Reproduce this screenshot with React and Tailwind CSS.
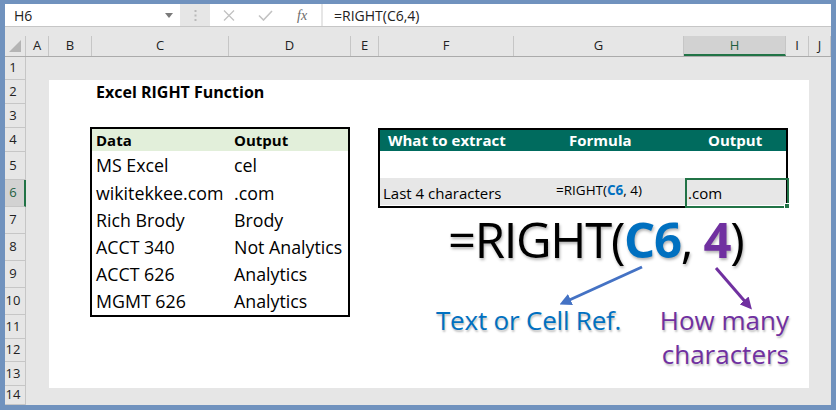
import React from "react";

const colHeaders = [
  { l: "A", w: "w-[23px]" },
  { l: "B", w: "w-[43px]" },
  { l: "C", w: "w-[137px]" },
  { l: "D", w: "w-[122px]" },
  { l: "E", w: "w-[28px]" },
  { l: "F", w: "w-[135px]" },
  { l: "G", w: "w-[170px]" },
  { l: "H", w: "w-[102px]", active: true },
  { l: "I", w: "w-[23px]" },
  { l: "J", w: "w-[22px]" },
];

const rowHeaders = [
  { n: 1, h: "h-[23px]" },
  { n: 2, h: "h-[24px]" },
  { n: 3, h: "h-[24px]" },
  { n: 4, h: "h-[24px]" },
  { n: 5, h: "h-[28px]" },
  { n: 6, h: "h-[27px]", active: true },
  { n: 7, h: "h-[27px]" },
  { n: 8, h: "h-[27px]" },
  { n: 9, h: "h-[27px]" },
  { n: 10, h: "h-[27px]" },
  { n: 11, h: "h-[24px]" },
  { n: 12, h: "h-[23px]" },
  { n: 13, h: "h-[24px]" },
  { n: 14, h: "h-[19px]" },
];

const dataRows = [
  ["MS Excel", "cel", "h-[28px]"],
  ["wikitekkee.com", ".com", "h-[27px]"],
  ["Rich Brody", "Brody", "h-[27px]"],
  ["ACCT 340", "Not Analytics", "h-[27px]"],
  ["ACCT 626", "Analytics", "h-[27px]"],
  ["MGMT 626", "Analytics", "h-[28px]"],
];

function FormulaBar() {
  return (
    <div className="flex h-[23px] border-b border-[#c6c6c6] bg-[#e6e6e6]">
      <div className="flex w-[175px] items-center justify-between bg-white pl-[9px] pr-[7px] text-[14px] text-[#222]">
        <span>H6</span>
        <svg width="8" height="5" viewBox="0 0 8 5">
          <path d="M0 0h8L4 5z" fill="#7a7a7a" />
        </svg>
      </div>
      <div className="flex w-[30px] items-center justify-center">
        <svg width="3" height="11" viewBox="0 0 3 11">
          <rect x="0.5" y="0" width="2" height="2" fill="#b9b9b9" />
          <rect x="0.5" y="4.5" width="2" height="2" fill="#b9b9b9" />
          <rect x="0.5" y="9" width="2" height="2" fill="#b9b9b9" />
        </svg>
      </div>
      <div className="flex w-[111px] items-center bg-white">
        <svg className="ml-[13px]" width="12" height="11" viewBox="0 0 12 11">
          <path d="M1 0.5l10 10M11 0.5l-10 10" stroke="#c2c2c2" strokeWidth="1.3" />
        </svg>
        <svg className="ml-[23px]" width="15" height="11" viewBox="0 0 15 11">
          <path d="M1 5.5l4.5 4.5L14 1" stroke="#c2c2c2" strokeWidth="1.6" fill="none" />
        </svg>
        <span className="ml-[24px] font-['Liberation_Serif',serif] text-[14px] italic text-[#6b6b6b]">
          fx
        </span>
      </div>
      <div className="ml-[2px] flex flex-1 items-center bg-white pl-[11px] text-[14px] text-[#222]">
        =RIGHT(C6,4)
      </div>
    </div>
  );
}

function ColumnHeaders() {
  return (
    <div className="flex h-[21px] border-b border-[#ababab] bg-[#e6e6e6] text-[13px] text-[#222]">
      <div className="flex w-[21px] items-end justify-end border-r border-[#c6c6c6] pb-[4px] pr-[4px]">
        <svg width="12" height="12" viewBox="0 0 12 12">
          <path d="M12 0V12H0z" fill="#b4b4b4" />
        </svg>
      </div>
      {colHeaders.map((c) => (
        <div
          key={c.l}
          className={
            c.active
              ? `${c.w} flex items-center justify-center border-r border-b-2 border-r-[#c6c6c6] border-b-[#217346] bg-[#d2d2d2] pt-[2px] text-[#1e5f3f]`
              : `${c.w} flex items-center justify-center border-r border-[#c6c6c6]`
          }
        >
          {c.l}
        </div>
      ))}
    </div>
  );
}

function RowHeaders() {
  return (
    <div className="flex w-[21px] flex-col text-[13px] text-[#222]">
      {rowHeaders.map((r) => (
        <div
          key={r.n}
          className={
            r.active
              ? `${r.h} flex items-center justify-center border-b border-r-2 border-b-[#c6c6c6] border-r-[#217346] bg-[#d2d2d2] pr-[3px] text-[#1e5f3f]`
              : `${r.h} flex items-center justify-center border-b border-r border-[#c6c6c6] pr-[4px]`
          }
        >
          {r.n}
        </div>
      ))}
    </div>
  );
}

function DataTable() {
  return (
    <div className="col-start-3 col-end-5 row-start-4 row-end-11 -mt-[1px] -mb-[2px] -ml-[2px] mr-[1px] flex flex-col border-2 border-black bg-white">
      <div className="flex h-[22px] items-center bg-[#e2efda] text-[15px] font-bold text-black">
        <span className="w-[139px] pl-[4px]">Data</span>
        <span className="pl-[3px]">Output</span>
      </div>
      {dataRows.map(([a, b, h]) => (
        <div key={a} className={`${h} flex items-center pt-[1px] text-[17.8px] text-black`}>
          <span className="w-[139px] pl-[4px]">{a}</span>
          <span className="pl-[3px]">{b}</span>
        </div>
      ))}
    </div>
  );
}

function ExtractTable() {
  return (
    <div className="col-start-6 col-end-9 row-start-4 row-end-7 -mr-[2px] -mb-[1px] -ml-[1px] flex flex-col border-2 border-black bg-white">
      <div className="flex h-[21px] items-center bg-[#006b5e] text-[15px] font-bold text-white">
        <span className="w-[135px] pl-[8px]">What to extract</span>
        <span className="w-[170px] pl-[54px]">Formula</span>
        <span className="pl-[23px]">Output</span>
      </div>
      <div className="h-[27px]" />
      <div className="relative flex h-[27px] items-end bg-[#e7e7e7] pb-[1px] text-black">
        <span className="w-[135px] pl-[3px] text-[15px]">Last 4 characters</span>
        <span className="w-[170px] pl-[41px] pb-[4px] text-[13.5px]">
          =RIGHT(<b className="text-[#0070c0]">C6</b>, 4)
        </span>
        <span className="pl-[3px] text-[15px]">.com</span>
        <div className="absolute -right-[3px] -bottom-[3px] h-[30px] w-[104px] border-2 border-[#217346]">
          <div className="absolute -right-[3px] -bottom-[3px] h-[6px] w-[6px] border border-white bg-[#217346]" />
        </div>
      </div>
    </div>
  );
}

function Annotation() {
  return (
    <div className="relative col-start-6 col-end-9 row-start-7 row-end-14 flex flex-col">
      <div className="ml-[69px] mt-[8px] text-[49px] leading-none tracking-[-1.3px] text-black [text-shadow:1px_2px_3px_rgba(0,0,0,0.3)]">
        =RIGHT(<b className="text-[#0070c0]">C6</b>, <b className="text-[#7030a0]">4</b>)
      </div>
      <div className="mt-[39px] flex text-[26px] leading-[34px] [text-shadow:1px_2px_2px_rgba(0,0,0,0.25)]">
        <span className="ml-[57px] tracking-[-0.2px] text-[#0070c0]">Text or Cell Ref.</span>
        <span className="-mr-[3px] ml-auto text-right text-[#7030a0]">
          How many
          <br />
          characters
        </span>
      </div>
      <svg className="pointer-events-none absolute inset-0" width="100%" height="100%">
        <defs>
          <marker id="ab" markerWidth="4" markerHeight="4" refX="2" refY="2" orient="auto">
            <path d="M0 0L4 2L0 4z" fill="#4472c4" />
          </marker>
          <marker id="ap" markerWidth="4" markerHeight="4" refX="2" refY="2" orient="auto">
            <path d="M0 0L4 2L0 4z" fill="#7030a0" />
          </marker>
        </defs>
        <line x1="263" y1="60" x2="186" y2="95" stroke="#4472c4" strokeWidth="3" markerEnd="url(#ab)" />
        <line x1="337" y1="61" x2="369" y2="98" stroke="#7030a0" strokeWidth="3" markerEnd="url(#ap)" />
      </svg>
    </div>
  );
}

export default function App() {
  return (
    <div className="h-[410px] w-[836px] bg-[#7092be] pt-[4px] pr-[5px] pb-[5px] pl-[5px] font-['Open_Sans',sans-serif]">
      <div className="flex h-full flex-col bg-[#e6e6e6]">
        <FormulaBar />
        <div className="h-[9px]" />
        <ColumnHeaders />
        <div className="flex flex-1">
          <RowHeaders />
          <div className="grid flex-1 grid-cols-[23px_43px_137px_122px_28px_135px_170px_102px_23px_22px] grid-rows-[23px_24px_24px_24px_28px_27px_27px_27px_27px_27px_24px_23px_24px_19px]">
            <div className="col-start-2 col-end-10 row-start-2 row-end-14 -mb-[2px] bg-white" />
            <div className="col-start-3 col-end-6 row-start-2 flex items-center pl-[4px] text-[16px] font-bold text-black">
              Excel RIGHT Function
            </div>
            <DataTable />
            <ExtractTable />
            <Annotation />
          </div>
        </div>
      </div>
    </div>
  );
}
